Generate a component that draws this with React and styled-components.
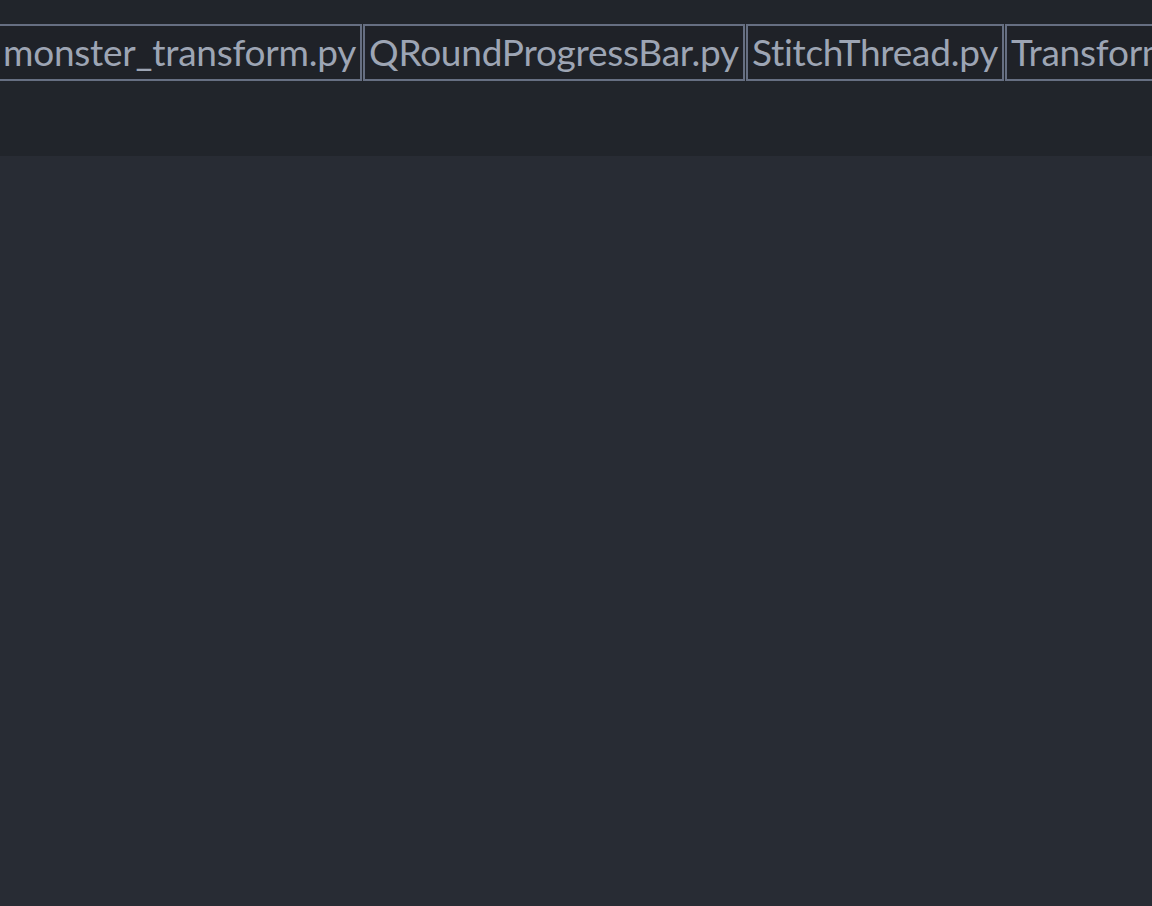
import React from "react";
import styled, { createGlobalStyle } from "styled-components";

const Global = createGlobalStyle`
  html, body { margin: 0; padding: 0; background: #282c34; }
  body { font-family: Lato, "Open Sans", sans-serif; }
`;

const Page = styled.div`
  width: 1152px;
  height: 906px;
  display: flex;
  flex-direction: column;
  background: #282c34;
  overflow: hidden;
`;

const Header = styled.div`
  height: 156px;
  background: #21252b;
  padding-top: 24px;
  box-sizing: border-box;
  overflow: hidden;
`;

const TabStrip = styled.div`
  display: flex;
  gap: 1px;
  margin-left: -3px;
  white-space: nowrap;
`;

const Tab = styled.div`
  flex: none;
  height: 57px;
  box-sizing: border-box;
  border: 2px solid #666f82;
  padding: 0 4px 3px;
  display: flex;
  align-items: center;
  font-size: 37px;
  letter-spacing: -0.25px;
  color: #9da5b4;
  background: #1f2228;
`;

const Editor = styled.div`
  flex: 1;
  background: #282c34;
`;

const files = [
  "monster_transform.py",
  "QRoundProgressBar.py",
  "StitchThread.py",
  "TransformWidget.py",
];

export default function App() {
  return (
    <Page>
      <Global />
      <Header>
        <TabStrip>
          {files.map((f) => (
            <Tab key={f}>{f}</Tab>
          ))}
        </TabStrip>
      </Header>
      <Editor />
    </Page>
  );
}
